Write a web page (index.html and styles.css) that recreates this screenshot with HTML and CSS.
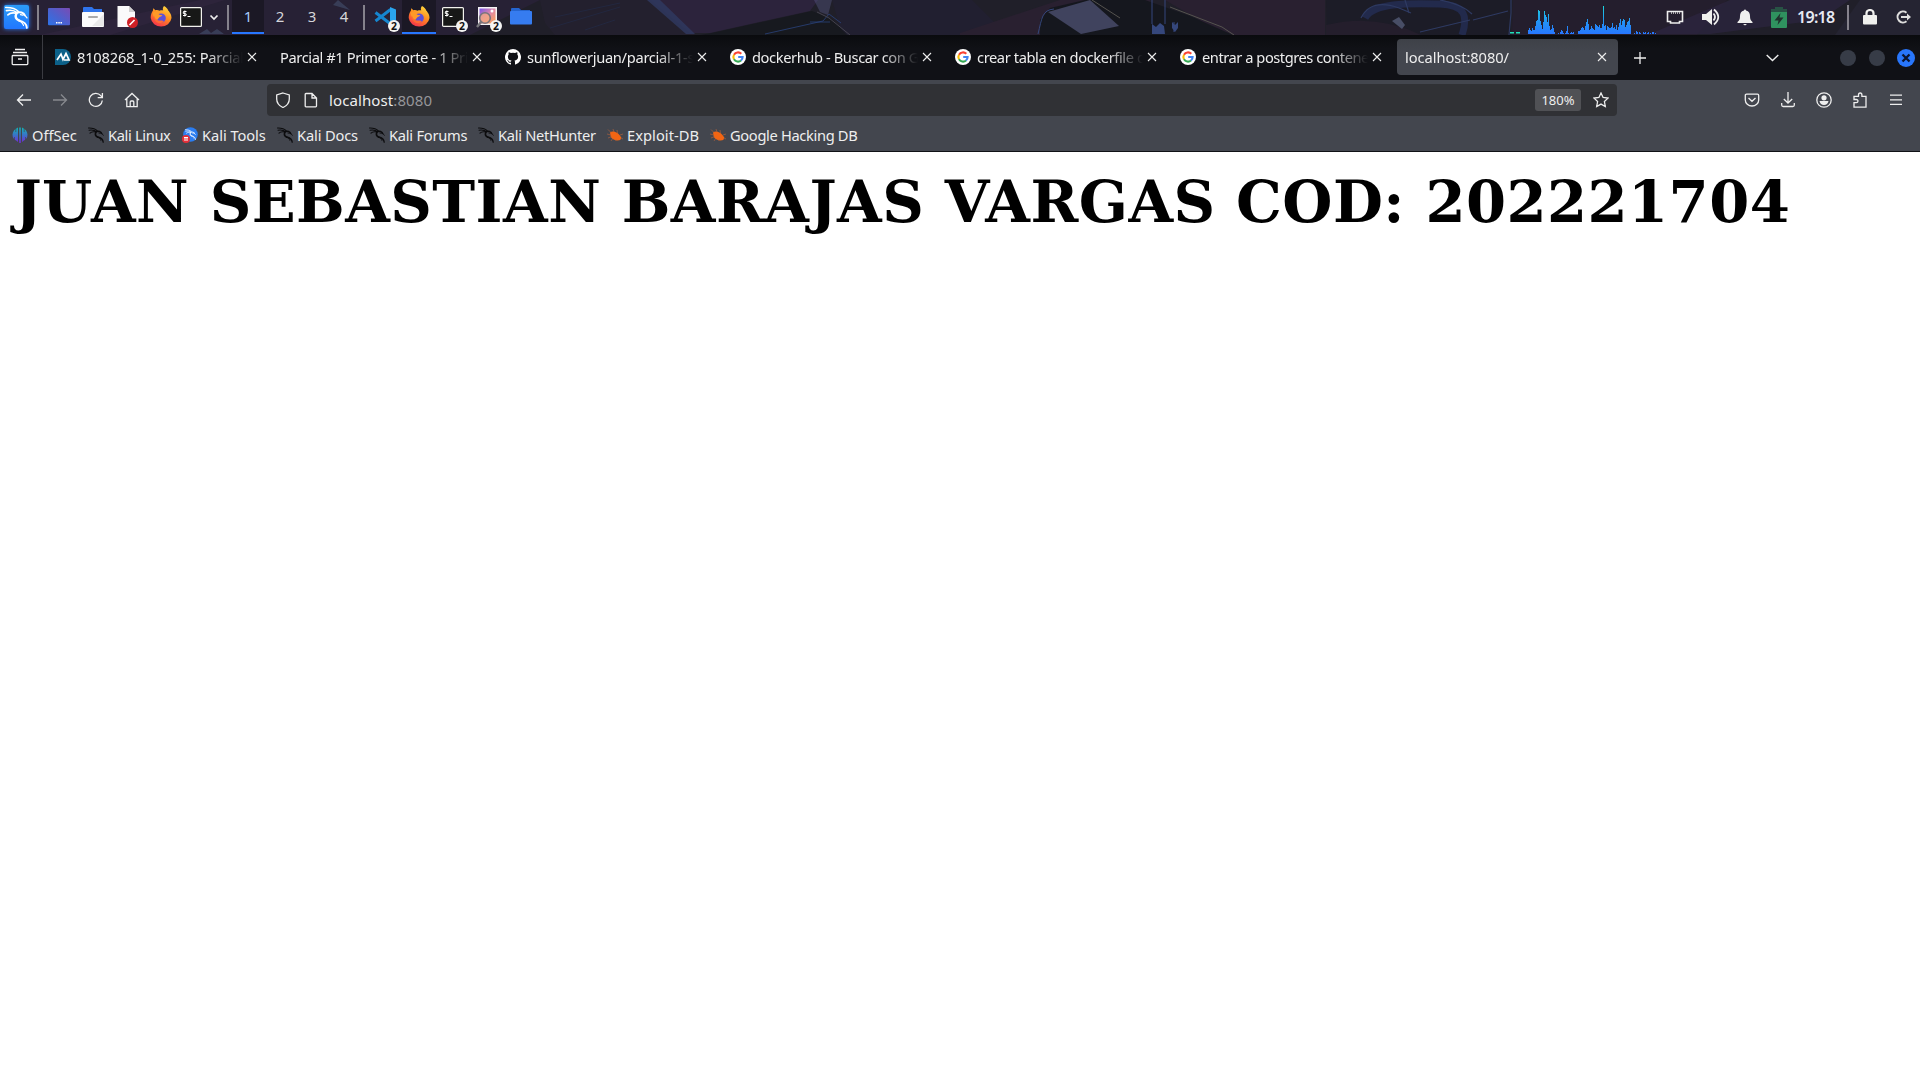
FILE: index.html
```html
<!DOCTYPE html>
<html lang="es">
<head>
<meta charset="utf-8">
<title>localhost:8080/</title>
<link rel="stylesheet" href="styles.css">
</head>
<body>
<svg class="defs" aria-hidden="true">
  <defs>
    <linearGradient id="fx" x1="0.8" y1="0" x2="0.3" y2="1"><stop offset="0" stop-color="#ffdc3e"/><stop offset=".5" stop-color="#ff8a20"/><stop offset="1" stop-color="#f5304e"/></linearGradient>
    <linearGradient id="desk" x1="0" y1="1" x2="1" y2="0"><stop offset="0" stop-color="#2d73e8"/><stop offset=".45" stop-color="#4a62d0"/><stop offset="1" stop-color="#7a4bb4"/></linearGradient>
    <linearGradient id="kali" x1="0" y1="0" x2="0" y2="1"><stop offset="0" stop-color="#2b9cf8"/><stop offset="1" stop-color="#2177ff"/></linearGradient>
    <linearGradient id="off" x1="0" y1="0" x2="0" y2="1"><stop offset="0" stop-color="#12b5b5"/><stop offset=".5" stop-color="#3a72c8"/><stop offset="1" stop-color="#7427d8"/></linearGradient>
    <linearGradient id="load" gradientUnits="userSpaceOnUse" x1="0" y1="4" x2="0" y2="34"><stop offset="0" stop-color="#19e0dc"/><stop offset=".55" stop-color="#2296f2"/><stop offset="1" stop-color="#2777ff"/></linearGradient>
    <linearGradient id="photo" x1="0" y1="0" x2="1" y2="1"><stop offset="0" stop-color="#7a54e8"/><stop offset=".5" stop-color="#e08aa8"/><stop offset="1" stop-color="#ffa64a"/></linearGradient>
    <symbol id="dragon" viewBox="0 0 16 16">
      <g fill="none" stroke="currentColor" stroke-linecap="round">
        <path stroke-width="1.100" d="M.5 1C4.500 .9 7.500 1.800 9.300 3.800M1 3.200C4 2.600 6.500 3 8.500 4.600M2 6.200C3.200 5 5 4.500 7.500 5"/>
        <path stroke-width="1.500" d="M8 4.800C10.500 3.800 13 4.600 13.600 6.400"/>
        <path stroke-width=".9" d="M13 5.500L15.300 8.300M12.300 6.300L10.800 6"/>
        <path stroke-width="1.700" d="M8 5C6.800 7.500 7.500 9.300 10 10.200"/>
        <path stroke-width="1.300" d="M9.500 10C12.500 10.600 15 11.500 15.200 15.200"/>
        <path stroke-width=".8" d="M10.500 10.600C12.500 12 12.600 12.800 12.900 13.600"/>
      </g>
    </symbol>
    <symbol id="firefox" viewBox="0 0 22 22">
      <path fill="url(#fx)" d="M14 0c2.500 1.200 3.700 3 4.200 4.600c.6.300 1 .9 1.300 1.600c1.700 2 2 4.200 2 5.800A10.500 10 0 0 1 .7 12C.6 9 1.600 6.500 3 4.600l.2-2.300c1 .5 1.600 1.200 2 2c1.600-.4 3-.2 4.300.4c1.500-.8 3-.5 3.700-.3C12.400 3 13 1 14 0z"/>
      <circle cx="11.200" cy="12" r="4.600" fill="#5b50d8"/>
      <path fill="#ff9a28" d="M2.500 7c2-1.800 5-2 7.200-.7l-1 2.200c1.200.4 2.600.4 3.700.8c-.7 1.200-2 1.400-3 2c-1 .8-1.600 2-2.200 2.800C4.500 13 3 10 2.500 7z"/>
      <path fill="#ff6a35" d="M4 9.500c1 4 3 5 6 5c2-.3 3 .5 4 .5c-1.500 2.500-6 3-8.500 0C4 13.500 3.700 11 4 9.500z"/>
    </symbol>
    <symbol id="terminal" viewBox="0 0 22 20">
      <rect x=".6" y=".6" width="20.800" height="18.800" rx="1" fill="#171817" stroke="#f2f2ed" stroke-width="1.200"/>
      <path d="M4.800 3.500v6M6.500 4.500H3.500L3.200 6.300l3 .7l-.2 1.500H3M7.500 9.500h3" fill="none" stroke="#fff" stroke-width="1"/>
    </symbol>
    <symbol id="google" viewBox="0 0 16 16">
      <circle cx="8" cy="8" r="8" fill="#fff"/>
      <g fill="none" stroke-width="2.100"><path stroke="#fa4334" d="M4 5.700A4.600 4.600 0 0 1 11.300 4.800"/><path stroke="#fbbc05" d="M4 5.700A4.600 4.600 0 0 0 4 10.300"/><path stroke="#34a853" d="M4 10.300A4.600 4.600 0 0 0 11 11.500"/><path stroke="#4285f4" d="M8.200 8h4.400A4.600 4.600 0 0 1 11 11.500"/></g>
    </symbol>
    <symbol id="close" viewBox="0 0 10 10"><path d="M1 1l8 8M9 1L1 9" fill="none" stroke="currentColor" stroke-width="1.100"/></symbol>
    <symbol id="bug" viewBox="0 0 16 14">
      <path fill="#f26513" d="M3 4.500C5 2.500 10 3.500 12.500 7l1.800 2.500l-1 2.500C10 13 5.500 12 3.800 9z"/>
      <path fill="none" stroke="#b8653c" stroke-width=".6" d="M1 1.500l3 3M6 1l1 3M10 2l.5 3M0 6l4 1M1 10l4-1.500M4 13l2-3M13 7l3-1M14 10l2 1M9 13V11"/>
    </symbol>
  </defs>
</svg>

<header class="panel">
  <svg class="wallpaper" viewBox="0 0 1920 35" preserveAspectRatio="none">
    <rect width="1920" height="35" fill="#201f29"/>
    <path fill="#272135" d="M0 0H540L470 35H0z"/>
    <path fill="#32273f" opacity=".6" d="M40 35L200 0H225L110 35z"/>
    <path fill="#2b2238" d="M540 0h110l45 35H555l-10-12z" opacity=".35"/>
    <path fill="#2c233c" d="M650 0H818L810 11L710 33H690z"/>
    <path fill="#2f3a62" opacity=".8" d="M647 0H660L695 34H686z"/>
    <path fill="#6d72aa" opacity=".3" d="M814 0h18l-4 15l-8-3z"/>
    <path fill="#211f30" d="M832 0h140l28 28l-40 7H842z"/>
    <path fill="#17191f" d="M712 33l100-22l20 8l15 16H700z"/>
    <path fill="none" stroke="#29437c" stroke-width=".8" d="M765 34l58-13l6-7l12 9M810 22h20"/>
    <path fill="none" stroke="#45434e" stroke-width="1" d="M817 12l12 6l21 17"/>
    <path fill="none" stroke="#22273f" stroke-width="1" d="M550 28l70-21M555 17l65-14M585 30l30-10"/>
    <path fill="#292030" d="M960 33L1060 0h90v35H960zM1165 0h160v35h-100z"/>
    <path fill="#15171e" d="M1040 20l10-12l35-8h60l45 16l43 19H1040z"/>
    <path fill="#40435e" d="M1048 12L1090 0l29 26l-38 8z"/>
    <path fill="none" stroke="#55534f" d="M1092 0l28 18M1170 7l52 20l12 8"/>
    <path fill="none" stroke="#35477c" d="M1038 34c4-16 4-24 16-25M1152 0v24M1165 0v24M1174 22v10"/>
    <path fill="#35477c" d="M1152 24l4 3l4-4l4 3l1 8h-13zM1172 22l3 3l3-3v6l-3 4l-3-4z"/>
    <path fill="#1c1c27" d="M1326 0h185v35h-184z"/>
    <path fill="#241e2c" d="M1326 25q50-12 95 10h-95z"/>
    <path fill="none" stroke="#222a4c" stroke-width="7" d="M1365 18c8-15 42-15 75-14c26 1 28 13 22 31"/>
    <path fill="none" stroke="#2e3a62" stroke-width="1.200" d="M1361 18c8-16 24-15 38-10l12 5M1405 0l4 13M1440 0c15 3 26 8 32 14M1420 32l50-12M1473 20l35-9M1511 0v13l-2 22"/>
    <path fill="#484e66" d="M1399 17l6 8l-3 4l-10-8z"/>
    <path fill="#241e2d" d="M1513 0h214l-30 35h-185z"/>
    <path fill="#2f2645" d="M1730 0h120l-30 20l-110 14h-60z" opacity=".6"/>
    <path fill="#252432" d="M1860 0h60v35h-85z"/>
    <path fill="#53698b" opacity=".4" d="M199 34l8-5l4 4l6-4l7 5zM338 0l12 10l-17-5z"/>
  </svg>
  <div class="launchers">
    <svg class="kali-logo" viewBox="0 0 25 24"><rect width="25" height="24" rx="2" fill="url(#kali)"/><use href="#dragon" x="1" y="1" width="23" height="23" color="#fff"/></svg>
    <i class="sep"></i>
    <svg class="app desk" width="22" height="18" viewBox="0 0 22 18"><rect width="22" height="17.300" rx="1" fill="url(#desk)"/><path fill="#fff" d="M8 14h1.500v1.500H8zM10.300 14h1.500v1.500h-1.500zM12.500 14H14v1.500h-1.500z"/></svg>
    <svg class="app" width="22" height="20" viewBox="0 0 22 20"><path fill="#2f74ec" d="M1 1q0-1 1-1h8l2 2h8v6H1z"/><rect y="5" width="22" height="15" rx="1" fill="#fbfbfb"/><path fill="#e9e9e9" d="M22 7v12H10z"/><rect x="6" y="9" width="10" height="2" rx="1" fill="#aaa"/></svg>
    <svg class="app" width="22" height="22" viewBox="0 0 22 22"><path fill="#fafafa" d="M1.500 0H13l6 6v15H1.500z"/><path fill="#d0d0d0" d="M13 0l6 6h-6z"/><circle cx="16.500" cy="16.500" r="5.500" fill="#cf2026"/><path d="M13.500 19l5-5" stroke="#fff" stroke-width="1.600"/></svg>
    <svg class="app" width="22" height="22"><use href="#firefox"/></svg>
    <svg class="app term" width="22" height="20"><use href="#terminal"/></svg>
    <svg class="drop" width="10" height="7" viewBox="0 0 10 7"><path d="M1.500 1.500L5 5l3.500-3.500" fill="none" stroke="#eee" stroke-width="1.700"/></svg>
    <i class="sep"></i>
  </div>
  <div class="workspaces"><span class="on">1</span><span>2</span><span>3</span><span>4</span></div>
  <i class="sep sep-tasks"></i>
  <div class="tasks">
    <span class="task"><svg width="22" height="20" viewBox="0 0 22 20"><path d="M1.500 5.500l14.500 11M1.500 14L16.500 2.500" stroke="#1686cf" stroke-width="3" fill="none"/><path fill="#2aa4ee" d="M16 0l6 2.500v15L16 20z"/></svg><b>2</b></span>
    <span class="task on"><svg width="22" height="22"><use href="#firefox"/></svg></span>
    <span class="task"><svg width="22" height="20"><use href="#terminal"/></svg><b>2</b></span>
    <span class="task"><svg width="22" height="22" viewBox="0 0 22 22"><rect x="2" y="1" width="19" height="18" fill="#f4f4f4"/><rect x="3.500" y="2.500" width="16" height="15" fill="url(#photo)"/><path d="M6 15l-5 6" stroke="#77767b" stroke-width="2.500"/><circle cx="9" cy="12" r="5.300" fill="#f4aa80" fill-opacity=".75" stroke="#77757c" stroke-width="1.600"/><circle cx="16" cy="5" r="1.500" fill="#fff"/></svg><b>2</b></span>
    <span class="task"><svg width="22" height="18" viewBox="0 0 22 18"><path fill="#2565cf" d="M1 1q0-1 1-1h7l2 2h9v4H1z"/><rect y="3" width="22" height="13.500" rx="1" fill="#367cf0"/></svg></span>
  </div>
  <svg class="graph" width="150" height="34" viewBox="1508 0 150 34">
    <path fill="#20dfba" d="M1510 32h4v1.500h-4zM1516 32h4v1.500h-4z"/>
    <path id="bars" fill="url(#load)" d=""/>
  </svg>
  <div class="tray">
    <svg width="18" height="16" viewBox="0 0 18 16"><path d="M1.500 2.500h15v10h-3v1.500h-9v-1.500h-3z" fill="none" stroke="#eee" stroke-width="1.600"/><path d="M5.500 3v2M7.500 3v2M9.500 3v2M11.500 3v2M13.500 3v2" stroke="#ccc" stroke-width=".8"/></svg>
    <svg width="18" height="18" viewBox="0 0 18 18"><path fill="#f0f0ee" d="M0 6h4l6-5v16l-6-5H0z"/><path d="M11.500 5.500q3 3.500 0 7M12 1.500q8.500 7.500 0 15" fill="none" stroke="#eee" stroke-width="1.800"/></svg>
    <svg width="16" height="17" viewBox="0 0 16 17"><path fill="#f0f0ee" d="M7 1.500a1 1 0 0 1 2 0c3 .7 4 3 4 5.500c0 3 .5 4.500 2.500 6v1H.5v-1C2.500 11.500 3 10 3 7c0-2.500 1-4.800 4-5.500zM6 15h4l-2 1.500z"/></svg>
    <svg width="16" height="21" viewBox="0 0 16 21"><path fill="#285345" d="M4 0h8v2h4v4H0V2h4z"/><path fill="#2f925f" d="M0 5h16v15q0 1-1 1H1q-1 0-1-1z"/><path fill="#20332e" d="M9.500 6l-6 7.500h4L6.500 18l6-7.500h-4z"/></svg>
    <time>19:18</time>
    <i class="sep"></i>
    <svg width="14" height="16" viewBox="0 0 14 16"><rect y="6" width="14" height="9.500" rx="1" fill="#f0f0ee"/><path d="M3.500 7V4a3.500 3 0 0 1 7 0v3" fill="none" stroke="#f0f0ee" stroke-width="2.200"/></svg>
    <svg width="16" height="14" viewBox="0 0 16 14"><path d="M10.500 2.700A5.500 5.500 0 1 0 10.500 11.300" fill="none" stroke="#dededd" stroke-width="2"/><path fill="#dededd" d="M5 6h6V3.500l4 3.500l-4 3.500V8H5z"/></svg>
  </div>
</header>

<nav class="tabs">
  <div class="history"><svg width="18" height="18" viewBox="0 0 18 18"><path d="M4 1.500h10M2 4.500h14M2 7.500h14q.8 0 .8.800v7.500q0 .8-.8.800H2q-.8 0-.8-.8V8.300q0-.8.8-.8zM7 11h4" fill="none" stroke="#eee" stroke-width="1.300"/></svg></div>
  <div class="tab"><svg class="fav" viewBox="0 0 16 16"><path fill="#0c6189" d="M0 0h8a8 8 0 0 1 0 16H0z"/><path d="M2 11l4-6l2 5.500l3-6l3 6.500H9" fill="none" stroke="#fff" stroke-width="1.700"/></svg><span class="w1">8108268_1-0_255: Parcial</span><svg class="x"><use href="#close"/></svg></div>
  <div class="tab"><span class="w2">Parcial #1 Primer corte - 1 Pri</span><svg class="x"><use href="#close"/></svg></div>
  <div class="tab"><svg class="fav" viewBox="0 0 16 16"><path fill="#fff" d="M8 0a8 8 0 0 0-2.500 15.600c.4.100.5-.2.500-.4v-1.500c-2.200.5-2.700-1-2.700-1c-.4-.9-.9-1.100-.9-1.100c-.7-.5.1-.5.1-.5c.8.100 1.200.8 1.200.8c.7 1.200 1.900.9 2.300.7c.1-.5.3-.9.500-1.100c-1.800-.2-3.600-.9-3.600-4c0-.9.300-1.600.8-2.100c-.1-.2-.4-1 .1-2.100c0 0 .7-.2 2.200.8a7.500 7.500 0 0 1 4 0c1.500-1 2.200-.8 2.200-.8c.4 1.100.2 1.900.1 2.100c.5.600.8 1.300.8 2.100c0 3.100-1.900 3.800-3.700 4c.3.300.6.800.6 1.500v2.200c0 .2.100.5.500.4A8 8 0 0 0 8 0z"/></svg><span class="w3">sunflowerjuan/parcial-1-s</span><svg class="x"><use href="#close"/></svg></div>
  <div class="tab"><svg class="fav"><use href="#google"/></svg><span class="w4">dockerhub - Buscar con G</span><svg class="x"><use href="#close"/></svg></div>
  <div class="tab"><svg class="fav"><use href="#google"/></svg><span class="w5">crear tabla en dockerfile d</span><svg class="x"><use href="#close"/></svg></div>
  <div class="tab"><svg class="fav"><use href="#google"/></svg><span class="w6">entrar a postgres contene</span><svg class="x"><use href="#close"/></svg></div>
  <div class="tab active"><span class="w7">localhost:8080/</span><svg class="x"><use href="#close"/></svg></div>
  <svg class="plus" width="12" height="12" viewBox="0 0 12 12"><path d="M6 0v12M0 6h12" stroke="#eee" stroke-width="1.300"/></svg>
  <svg class="all" width="13" height="8" viewBox="0 0 13 8"><path d="M.7 1l5.800 5.500L12.300 1" fill="none" stroke="#eee" stroke-width="1.400"/></svg>
  <div class="window-buttons"><i></i><i></i><svg width="18" height="18" viewBox="0 0 18 18"><circle cx="9" cy="9" r="9" fill="#2876fb"/><path d="M5.500 5.500l7 7M12.500 5.500l-7 7" stroke="#0b1530" stroke-width="2.300"/></svg></div>
</nav>

<div class="toolbar">
  <div class="nav-buttons">
    <svg viewBox="0 0 16 16"><path d="M15 8H2M7 2.500L1.500 8L7 13.500"/></svg>
    <svg class="off" viewBox="0 0 16 16"><path d="M1 8h13M9 2.500L14.500 8L9 13.500"/></svg>
    <svg viewBox="0 0 16 16"><path d="M14.300 8.500A6.500 6.500 0 1 1 12.800 3.700L14.300 5M14.400 1v4.700H9.700"/></svg>
    <svg viewBox="0 0 16 16"><path d="M1 8l7-6.500L15 8M2.800 6.500v8.200h10.400V6.500M6.200 14.500V10q0-1 1-1h1.600q1 0 1 1v4.500"/></svg>
  </div>
  <div class="url">
    <svg viewBox="0 0 16 16"><path d="M8 1l6.300 2v4c0 4-3 7-6.300 8.500C4.700 14 1.700 11 1.700 7V3z"/></svg>
    <svg class="page" viewBox="0 0 16 16"><path d="M3 1.500h6l4.500 4.500v8q0 .8-.8.800H3q-.8 0-.8-.8V2.300q0-.8.800-.8zM9 1.500V6h4.500"/></svg>
    <span class="address">localhost<em>:8080</em></span>
    <span class="zoom">180%</span>
    <svg class="star" viewBox="0 0 16 16"><path d="M8 1l2.100 4.500l4.900.6l-3.600 3.400l.9 5L8 12.100l-4.300 2.400l.9-5L1 6.100l4.900-.6z"/></svg>
  </div>
  <div class="actions">
    <svg viewBox="0 0 16 16"><path d="M2.500 2.200h11q1.200 0 1.200 1.200V8A6.700 6 0 0 1 1.300 8V3.400q0-1.200 1.200-1.200zM4.500 6L8 9.300L11.500 6"/></svg>
    <svg viewBox="0 0 16 16"><path d="M8 0v11M3.800 7L8 11l4.200-4M1.700 11v2q0 1.500 1.500 1.500h9.600q1.500 0 1.500-1.500v-2"/></svg>
    <svg viewBox="0 0 16 16"><circle cx="8" cy="8" r="7.200"/><g fill="#eee" stroke="none"><circle cx="8" cy="5.800" r="2.600"/><path d="M3.500 9h9q-.8 4-4.500 4t-4.500-4z"/></g></svg>
    <svg viewBox="0 0 16 16"><path d="M2 15.200v-4.500h2.200q1.800 0 1.800-1.600T4.200 7.500H2V4.300h4.500V3q0-2 1.700-2t1.700 2v1.300H14v10.900z"/></svg>
    <svg viewBox="0 0 16 16"><path d="M2 3.200h12M2 7.800h12M2 12.400h12"/></svg>
  </div>
</div>

<div class="bookmarks">
  <a class="b1"><svg class="fav" viewBox="0 0 16 16"><path fill="url(#off)" d="M7.200 .5h1.600v15.500H7.200zM6 .5V15L4.500 13.800Q.5 12 .5 7.500Q1 2.500 6 .5zM10 .5V15l1.500-1.200Q15.500 12 15.500 7.500Q15 2.500 10 .5z"/><path stroke="#43464e" stroke-width=".7" d="M3.800 1v4M12.200 1v4M2.500 13v-3M13.500 13v-3"/></svg><span>OffSec</span></a>
  <a class="b2"><svg class="fav dark"><use href="#dragon"/></svg><span>Kali Linux</span></a>
  <a class="b3"><svg class="fav" viewBox="0 0 16 16"><circle cx="8.500" cy="7.500" r="7.300" fill="#2b7df0"/><use href="#dragon" x="3" y="2" width="11" height="11" color="#e8f2ff"/><circle cx="4" cy="12" r="4" fill="#e32f38"/><path d="M2 10.500h4M3 10.500V14M5 10.500V14" stroke="#fff" fill="none"/></svg><span>Kali Tools</span></a>
  <a class="b4"><svg class="fav dark"><use href="#dragon"/></svg><span>Kali Docs</span></a>
  <a class="b5"><svg class="fav dark"><use href="#dragon"/></svg><span>Kali Forums</span></a>
  <a class="b6"><svg class="fav dark"><use href="#dragon"/></svg><span>Kali NetHunter</span></a>
  <a class="b7"><svg class="fav"><use href="#bug"/></svg><span>Exploit-DB</span></a>
  <a class="b8"><svg class="fav"><use href="#bug"/></svg><span>Google Hacking DB</span></a>
</div>

<main><h1>JUAN SEBASTIAN BARAJAS VARGAS COD: 202221704</h1></main>
<script src="graph.js"></script>
</body>
</html>
```
FILE: graph.js
```js
// CPU load history, one pixel column per sample
const samples = [4,6,4,3,6,4,4,8,13,14,24,23,13,9,5,12,23,19,17,12,20,8,4,5,9,6,2,0,0,0,1,0,2,4,3,1,0,1,3,8,1,0,1,2,1,2,0,0,0,0,3,3,4,6,7,6,4,8,12,15,10,4,5,8,6,5,4,10,9,8,7,9,6,6,10,28,8,9,4,8,7,6,6,7,11,6,7,5,9,4,7,11,15,9,13,15,14,7,9,12,13,16,9,0,0,0,1,0,3,2,0,2,1,0,0,2,1,2,0,1,2,0,1,0,2,2,0,1];
document.getElementById('bars').setAttribute('d',
  samples.map((h, i) => h ? `M${1528 + i} 34v-${h}h1v${h}z` : '').join(''));
```
FILE: styles.css
```css
* { box-sizing: border-box; }
body { margin: 0; width: 1920px; height: 1080px; overflow: hidden; background: #fff; font-family: "Noto Sans", sans-serif; color: #eee; display: flex; flex-direction: column; }
svg { flex: none; display: block; }
.defs { position: absolute; width: 0; height: 0; }

.panel { position: relative; height: 35px; flex: none; display: flex; align-items: flex-start; border-bottom: 1px solid #15151c; }
.wallpaper { position: absolute; inset: 0; width: 1920px; height: 35px; }
.launchers, .workspaces, .tasks, .graph, .tray, .sep { position: relative; }
.launchers { height: 34px; width: 232px; display: flex; align-items: center; padding-left: 4px; }
.kali-logo { width: 25px; height: 24px; margin-right: 8px; filter: drop-shadow(0 0 2px #2b7df8); }
.sep { width: 2px; height: 25px; background: #85828c; flex: none; }
.desk { margin-left: 9px; }
.app + .app { margin-left: 12px; }
.app + .term { margin-left: 8px; }
.drop { margin: 0 8px 0 7px; }
.workspaces { display: flex; font-size: 15px; line-height: 33px; text-align: center; }
.workspaces span { width: 32px; height: 34px; color: #d6d6da; }
.workspaces .on, .task.on { border-bottom: 2px solid #2777ff; background: rgba(15, 15, 22, .5); }
.workspaces .on { color: #a6ccf8; }
.sep-tasks { margin: 5px 3px 0; }
.tasks { display: flex; }
.task { position: relative; width: 34px; height: 34px; display: flex; align-items: center; justify-content: center; }
.task.on { padding-top: 2px; }
.task b { position: absolute; left: 20px; top: 20px; width: 12px; height: 12px; border-radius: 50%; background: #f4f4f2; color: #111; font-size: 10.500px; line-height: 12px; text-align: center; }
.graph { margin-left: 970px; }
.tray { height: 34px; margin-left: 8px; display: flex; align-items: center; }
.tray svg:nth-child(2) { margin-left: 18px; }
.tray svg:nth-child(3) { margin-left: 17px; }
.tray svg:nth-child(4) { margin-left: 18px; }
.tray time { font-size: 16px; font-weight: 600; width: 38px; margin: -1px 12px 0 10px; letter-spacing: -.7px; white-space: nowrap; color: #e6e9f3; }
.tray .sep + svg { margin: 0 19px 0 14px; }

.tabs { height: 45px; flex: none; display: flex; align-items: center; background: linear-gradient(#0a0b0e, #101116 30%); font-size: 14.670px; }
.history { width: 43px; height: 44px; align-self: flex-start; border-right: 1px solid #3b3c42; display: flex; align-items: center; padding-left: 11px; margin-right: 4px; }
.tab { width: 221px; height: 36px; margin: 0 4px 1px 0; padding: 0 11px 0 8px; display: flex; align-items: center; border-radius: 4px; flex: none; }
.tab span { flex: 1; min-width: 0; overflow: hidden; white-space: nowrap; line-height: 24px; margin-right: 4px; mask-image: linear-gradient(90deg, #000 calc(100% - 36px), transparent); }
.tab .w1 { letter-spacing: -.2px; }
.tab .w2 { letter-spacing: -.4px; }
.tab .w3 { letter-spacing: -.3px; }
.tab .w4 { letter-spacing: -.4px; }
.tab .w5 { letter-spacing: -.4px; }
.tab .w6 { letter-spacing: -.46px; }
.tab .w7 { letter-spacing: -.06px; }
.tab.active { background: linear-gradient(#3e4148, #43464e 35%); }
.fav { width: 16px; height: 16px; margin-right: 6px; }
.x { width: 10px; height: 10px; }
.plus { margin-left: 12px; }
.all { margin-left: 120px; }
.window-buttons { display: flex; align-items: center; gap: 13px; margin-left: 61px; }
.window-buttons i { width: 16px; height: 16px; border-radius: 50%; background: #373c47; }
.window-buttons svg { margin-left: -1px; }

.toolbar { height: 40px; flex: none; background: #43464e; display: flex; align-items: center; }
.toolbar svg { width: 16px; height: 16px; fill: none; stroke: #eee; stroke-width: 1.300; }
.nav-buttons { width: 267px; display: flex; gap: 20px; padding-left: 16px; }
.nav-buttons .off { opacity: .4; }
.url { width: 1350px; height: 32px; border-radius: 4px; background: #303135; display: flex; align-items: center; padding: 0 8px; }
.url .page { margin: 0 10px 0 12px; }
.address { flex: 1; font-size: 15px; letter-spacing: .1px; }
.address em { font-style: normal; color: #96969a; }
.zoom { width: 46px; height: 22px; border-radius: 3px; background: #505155; font-size: 13px; line-height: 22px; text-align: center; margin-right: 12px; }
.actions { display: flex; gap: 20px; margin-left: 127px; }

.bookmarks { height: 32px; flex: none; background: #43464e; border-bottom: 1px solid #101116; display: flex; align-items: center; padding: 0 0 1px 12px; font-size: 14.670px; white-space: nowrap; }
.bookmarks a { display: flex; align-items: center; flex: none; }
.bookmarks .fav { margin-right: 4px; }
.bookmarks .dark { color: #0c0c0e; }
.b1 { width: 76px; }
.b2 { width: 94px; letter-spacing: -.35px; }
.b3 { width: 95px; letter-spacing: -.05px; }
.b4 { width: 92px; letter-spacing: -.15px; }
.b5 { width: 109px; letter-spacing: -.25px; }
.b6 { width: 129px; letter-spacing: -.3px; }
.b7 { width: 103px; letter-spacing: .05px; }
.b8 { letter-spacing: -.34px; }

main { flex: 1; background: #fff; padding: 16px 14.400px; }
h1 { margin: 0; color: #000; font: bold 57.600px "DejaVu Serif", serif; letter-spacing: .44px; white-space: nowrap; }
```
